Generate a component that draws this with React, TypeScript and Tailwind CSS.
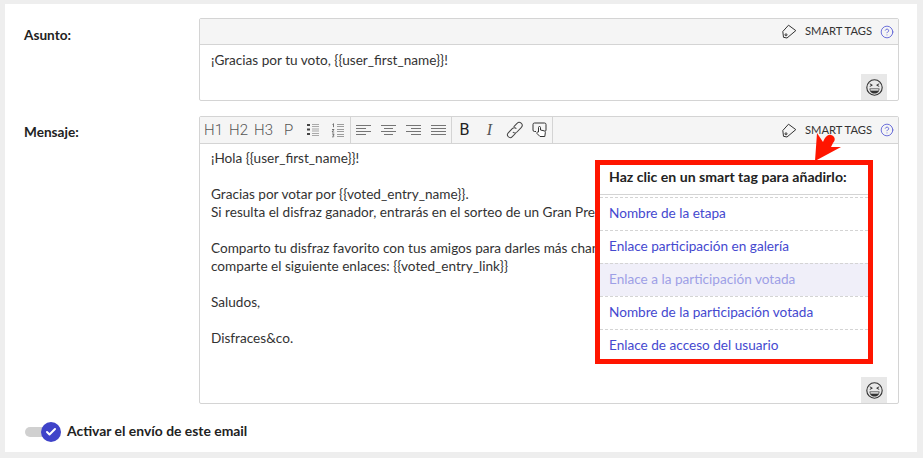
import { Check, CircleHelp } from "lucide-react";

const smartTags = [
  "Nombre de la etapa",
  "Enlace participación en galería",
  "Enlace a la participación votada",
  "Nombre de la participación votada",
  "Enlace de acceso del usuario",
];

const Lines = ({ rows }: { rows: [number, number][] }) => (
  <svg width="16" height="12" viewBox="0 0 16 12" stroke="#666" strokeWidth="0.9">
    {rows.map(([a, b], i) => (
      <line key={i} x1={a} x2={b} y1={1.5 + i * 3} y2={1.5 + i * 3} />
    ))}
  </svg>
);

const BulletList = () => (
  <svg width="14" height="14" viewBox="0 0 14 14" fill="#444" stroke="#888">
    <rect x="1" y="1" width="3" height="2" stroke="none" />
    <rect x="1" y="5.5" width="3" height="2" stroke="none" />
    <rect x="1" y="10" width="3" height="2" stroke="none" />
    <path d="M6 1.500h7M6 3.500h7M6 6h7M6 8h7M6 10.500h7M6 12.500h7" strokeWidth="0.7" />
  </svg>
);

const NumberList = () => (
  <svg width="14" height="15" viewBox="0 0 14 15" fill="none" stroke="#555" strokeWidth="0.8">
    <path d="M1.500 1.500l1-.8v3.500M1 6.500h2l-2 2.500h2.200M1 11h2.200l-1.200 1.300c1.500 0 1.500 2-1 1.500" />
    <path d="M6 1.500h7M6 3.500h7M6 6.500h7M6 8.500h7M6 11.500h7M6 13.500h7" strokeWidth="0.7" stroke="#777" />
  </svg>
);

const LinkIcon = () => (
  <svg width="18" height="18" viewBox="0 0 16 16" fill="none" stroke="#444" strokeWidth="0.9">
    <path d="M6.800 5.200 9.800 2.200a2.400 2.400 0 0 1 3.900 3.400L9.500 10a2.300 2.300 0 0 1-3.400-.2" />
    <path d="M9.200 6.800a2.300 2.300 0 0 0-3.400-.2L2 10.500a2.400 2.400 0 0 0 3.600 3.400l3-3" />
  </svg>
);

const HandBox = () => (
  <svg width="16" height="16" viewBox="0 0 16 16" fill="none" stroke="#333" strokeWidth="1">
    <path d="M4 9.500H2.500A1.500 1.500 0 0 1 1 8V2.500A1.500 1.500 0 0 1 2.500 1h10A1.500 1.500 0 0 1 14 2.500V8a1.500 1.500 0 0 1-1 1.400" />
    <path d="M6.500 10V5.500a1 1 0 0 1 2 0V8l3.500.8c1 .3 1.500 1 1.300 2L12.800 14.500H8L5 11.500c-.6-.9.500-1.800 1.500-1.500z" fill="#fff" />
  </svg>
);

const TagIcon = () => (
  <svg width="15" height="15" viewBox="0 0 15 15" fill="none" stroke="#333" strokeWidth="1">
    <path d="M6.500 1.200 13.800 6.600 5 14 1.500 13.300.8 7.500Z" strokeLinejoin="round" />
    <circle cx="4" cy="10.800" r="1" />
  </svg>
);

const LaughIcon = () => (
  <svg width="17" height="17" viewBox="0 0 17 17" fill="none" stroke="#333" strokeWidth="1.100">
    <circle cx="8.500" cy="8.500" r="7.700" />
    <path d="M3.800 4.800 6.300 6.200 3.800 7.400M13.200 4.800 10.700 6.200 13.200 7.400" strokeWidth="1" />
    <path d="M3.500 9.500h10c0 3-2 5-5 5s-5-2-5-5Z" fill="#333" stroke="none" />
    <path d="M4.400 10.900h8.200" stroke="#e8e8e8" strokeWidth="1.500" />
  </svg>
);

const textClass = "font-['Roboto',sans-serif] font-light text-[15px] ml-[2px] text-[#555]";

const toolbarGroups = [
  [
    <span key="h1" className={textClass}>H1</span>,
    <span key="h2" className={textClass}>H2</span>,
    <span key="h3" className={textClass}>H3</span>,
    <span key="p" className={textClass}>P</span>,
    <BulletList key="ul" />,
    <NumberList key="ol" />,
  ],
  [
    <Lines key="l" rows={[[0, 15], [0, 10], [0, 15], [0, 10]]} />,
    <Lines key="c" rows={[[0, 15], [3, 12], [0, 15], [3, 12]]} />,
    <Lines key="r" rows={[[0, 15], [5, 15], [0, 15], [5, 15]]} />,
    <Lines key="j" rows={[[0, 15], [0, 15], [0, 15], [0, 15]]} />,
  ],
  [
    <span key="b" className="font-['Roboto',sans-serif] font-normal text-[#222] text-[16px]">B</span>,
    <span key="i" className="font-['Liberation_Serif',serif] italic text-[16px] text-[#555]">I</span>,
    <LinkIcon key="a" />,
    <HandBox key="hand" />,
  ],
];

const SmartTagsLink = () => (
  <div className="ml-auto flex items-center h-full pr-[4px]">
    <TagIcon />
    <span className="ml-[8px] text-[11.200px] text-[#333]">SMART TAGS</span>
    <CircleHelp className="ml-[8px] w-[14px] h-[14px] text-[#5a5fd6]" strokeWidth={1.5} />
  </div>
);

const EmojiButton = () => (
  <div className="absolute right-[11px] bottom-0 w-[26px] h-[26px] bg-[#e8e8e8] flex items-center justify-center">
    <LaughIcon />
  </div>
);

export default function App() {
  return (
    <div className="h-[458px] bg-[#eeeeee] pt-[4px] pl-[5px] pr-[6px] pb-[6px] font-['Lato','Noto_Sans',sans-serif] text-[#333]">
      <div className="h-full bg-white pt-[14px] pl-[19px]">
        {/* Asunto */}
        <div className="flex">
          <div className="w-[175px] pt-[7px] text-[13.600px] font-bold text-[#222]">Asunto:</div>
          <div className="relative w-[700px] h-[83px] border border-[#d4d4d4] rounded-[2px]">
            <div className="flex h-[26px] bg-[#f5f5f5] border-b border-[#d4d4d4]">
              <SmartTagsLink />
            </div>
            <p className="pl-[11px] pt-[6px] text-[13.600px] leading-[18px]">¡Gracias por tu voto, {"{{user_first_name}}"}!</p>
            <EmojiButton />
          </div>
        </div>

        {/* Mensaje */}
        <div className="flex mt-[15px]">
          <div className="w-[175px] pt-[6px] text-[13.600px] font-bold text-[#222]">Mensaje:</div>
          <div className="relative w-[700px] h-[288px] border border-[#d4d4d4] rounded-[2px]">
            <div className="flex h-[27px] bg-[#f5f5f5] border-b border-[#d4d4d4]">
              {toolbarGroups.map((group, g) => (
                <div key={g} className="flex border-r border-[#d4d4d4]">
                  {group.map((item, i) => (
                    <div key={i} className="w-[25px] flex items-center justify-center text-[#444]">
                      {item}
                    </div>
                  ))}
                </div>
              ))}
              <SmartTagsLink />
            </div>
            <div className="pl-[11px] pt-[5px] text-[13.600px] leading-[18px]">
              <p>¡Hola {"{{user_first_name}}"}!</p>
              <p className="mt-[18px]">Gracias por votar por {"{{voted_entry_name}}"}.</p>
              <p>Si resulta el disfraz ganador, entrarás en el sorteo de un Gran Premio</p>
              <p className="mt-[18px]">Comparto tu disfraz favorito con tus amigos para darles más chances,</p>
              <p>comparte el siguiente enlaces: {"{{voted_entry_link}}"}</p>
              <p className="mt-[18px]">Saludos,</p>
              <p className="mt-[18px]">Disfraces&amp;co.</p>
            </div>
            <EmojiButton />

            {/* Popup with red annotation */}
            <div className="absolute left-[395px] top-[43px] w-[278px] h-[204px] border-[5px] border-[#ff1500] bg-white">
              <div className="h-[30px] pl-[9px] pt-[3px] border-b border-[#d4d4d4] text-[14.100px] font-bold text-[#222] leading-[18px]">
                Haz clic en un smart tag para añadirlo:
              </div>
              <div className="mt-[2px]">
                {smartTags.map((tag, i) => (
                  <div
                    key={tag}
                    className={
                      i === 2
                        ? "h-[33px] pl-[9px] pb-[2px] flex items-center border-t border-dashed border-[#d4d4d4] text-[13.600px] text-[#9e9fe6] bg-[#f0eff9]"
                        : "h-[33px] pl-[9px] pb-[2px] flex items-center border-t border-dashed border-[#d4d4d4] text-[13.600px] text-[#4549cf]"
                    }
                  >
                    {tag}
                  </div>
                ))}
              </div>
            </div>
            <svg className="absolute left-[612px] top-[13px]" width="30" height="32" viewBox="0 0 30 32" fill="#ff1500">
              <path d="M3 31 L5 3 L11 12 C13 7 16 4 19 5 C23 6 24 10 21 13 L19 17 L29 17 L3 31 Z" />
            </svg>
          </div>
        </div>

        {/* Toggle */}
        <div className="flex items-center mt-[17px] ml-[1px]">
          <div className="relative w-[36px] h-[20px] flex items-center">
            <div className="w-[26px] h-[10px] rounded-full bg-[#d0d0d0]" />
            <div className="absolute left-[16px] top-0 w-[20px] h-[20px] rounded-full bg-[#3f43c9] flex items-center justify-center">
              <Check className="w-[12px] h-[12px] text-white" strokeWidth={4} />
            </div>
          </div>
          <span className="ml-[6px] pb-[2px] text-[13.900px] font-bold text-[#222]">Activar el envío de este email</span>
        </div>
      </div>
    </div>
  );
}
